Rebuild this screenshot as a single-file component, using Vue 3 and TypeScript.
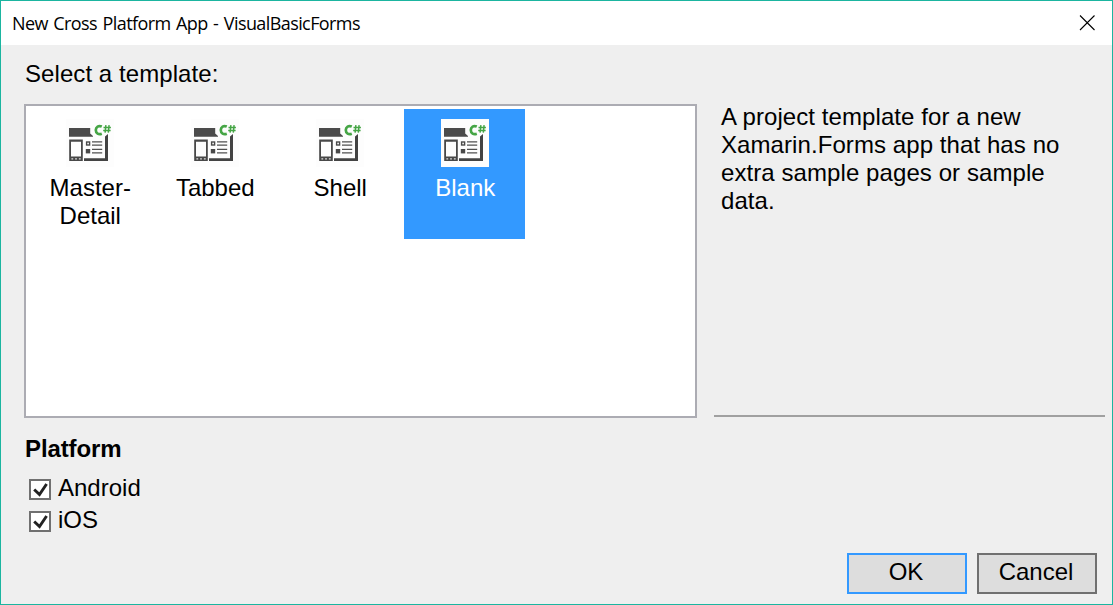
<script setup lang="ts">
import { ref } from 'vue'

interface Template {
  id: string
  lines: string[]
}

const templates: Template[] = [
  { id: 'master', lines: ['Master-', 'Detail'] },
  { id: 'tabbed', lines: ['Tabbed'] },
  { id: 'shell', lines: ['Shell'] },
  { id: 'blank', lines: ['Blank'] },
]
const selected = ref('blank')
const platforms = ref([
  { name: 'Android', checked: true },
  { name: 'iOS', checked: true },
])
</script>

<template>
  <div class="dialog">
    <header class="titlebar">
      <span class="title">New Cross Platform App - VisualBasicForms</span>
      <svg class="close" width="16" height="16" viewBox="0 0 16 16">
        <path d="M1 .5l14.5 14.5M15.5 .5l-14.5 14.5" stroke="#000" stroke-width="1.1" fill="none" />
      </svg>
    </header>
    <div class="prompt"><span>Select a template:</span></div>
    <main class="main">
      <div class="list">
        <div
          v-for="t in templates"
          :key="t.id"
          class="item"
          :class="{ selected: t.id === selected }"
          @click="selected = t.id"
        >
          <svg class="icon" width="48" height="48" viewBox="0 0 48 48">
            <rect width="48" height="48" fill="#fdfdfd" />
            <path d="M3 9H24.2V14.5L27 17V17.8H3Z" fill="#4b4b4b" />
            <path d="M42 15V42H18V39.2H39V17.5Z" fill="#434343" />
            <path
              d="M3.2 20.6H16.8V42H3.2ZM5 22.8V37.6H15V22.8Z"
              fill="#484848"
              fill-rule="evenodd"
            />
            <path d="M5.4 39.2h1.8v1.3H5.4zM9.1 39.2h1.8v1.3H9.1zM12.9 39.2h1.8v1.3h-1.8z" fill="#ddd" />
            <rect x="20.6" y="23" width="3" height="3" fill="none" stroke="#494949" stroke-width="1.4" />
            <rect x="19.8" y="30" width="4.4" height="4.4" fill="#484848" />
            <path d="M26 22.8H36.2M26 26.2H36.2M26 30.3H36.2M26 33.8H36.2" stroke="#505050" stroke-width="1.3" />
            <path
              d="M35.8 7.6C32.6 6.2 29.8 7.8 29.8 11.1C29.8 14.5 32.6 15.9 35.8 14.7"
              fill="none"
              stroke="#45a545"
              stroke-width="2.7"
            />
            <path
              d="M39.9 6.2L39.1 13.7M43.1 6.2L42.3 13.7M37.5 8.4H44.9M37.2 11.4H44.6"
              fill="none"
              stroke="#45a545"
              stroke-width="1.5"
            />
          </svg>
          <div class="label">
            <div v-for="l in t.lines" :key="l">{{ l }}</div>
          </div>
        </div>
      </div>
      <aside class="description">
        A project template for a new<br />Xamarin.Forms app that has no<br />extra sample pages or sample<br />data.
      </aside>
    </main>
    <section class="platform">
      <div class="heading">Platform</div>
      <div v-for="p in platforms" :key="p.name" class="option" @click="p.checked = !p.checked">
        <svg width="22" height="21" viewBox="0 0 22 21">
          <rect x="1" y="1" width="20" height="19" fill="#fff" stroke="#707070" stroke-width="2" />
          <path v-if="p.checked" d="M5.2 10.5L10.5 15.6L17.6 5" fill="none" stroke="#222" stroke-width="2.9" />
        </svg>
        <span>{{ p.name }}</span>
      </div>
    </section>
    <footer class="actions">
      <button class="button primary">OK</button>
      <button class="button">Cancel</button>
    </footer>
  </div>
</template>

<style>
body {
  margin: 0;
  overflow: hidden;
}
</style>

<style scoped>
.dialog {
  box-sizing: border-box;
  width: 1113px;
  height: 605px;
  border: 1px solid #1bb5a0;
  background: #efefef;
  color: #000;
  font: 24px/28px "Liberation Sans", Arial, sans-serif;
  display: flex;
  flex-direction: column;
}
.titlebar {
  height: 44px;
  flex: none;
  background: #fff;
  display: flex;
  align-items: center;
  justify-content: space-between;
  padding: 0 17px 0 11px;
  box-sizing: border-box;
}
.title {
  font: 18px/24px "Open Sans", "Noto Sans", sans-serif;
  letter-spacing: -0.59px;
  word-spacing: 1.4px;
  white-space: nowrap;
}
.prompt {
  height: 59px;
  flex: none;
  padding: 15px 0 0 24px;
  box-sizing: border-box;
  letter-spacing: 0.07px;
}
.main {
  display: flex;
  height: 314px;
  flex: none;
  padding: 0 7px 0 23px;
}
.list {
  box-sizing: border-box;
  width: 673px;
  border: 2px solid #acacb3;
  background: #fff;
  padding: 3px;
  display: flex;
  align-items: flex-start;
  gap: 4px;
}
.item {
  width: 121px;
  height: 130px;
  padding-top: 10px;
  box-sizing: border-box;
  text-align: center;
}
.icon {
  display: block;
  margin: 0 auto 7px;
  position: relative;
  left: 0.5px;
}
.label {
  padding-left: 1.5px;
}
.selected {
  background: #3399ff;
  color: #fff;
}
.description {
  margin: -1px 0 0 17px;
  height: 314px;
  box-sizing: border-box;
  flex: 1;
  padding-left: 7px;
  border-bottom: 2px solid #a0a0a0;
  white-space: nowrap;
  letter-spacing: 0.08px;
}
.platform {
  padding: 17px 0 0 24px;
  flex: 1;
}
.heading {
  font-weight: bold;
  margin-bottom: 11px;
  letter-spacing: -0.1px;
}
.option {
  height: 32px;
  display: flex;
  align-items: flex-start;
  padding-left: 4px;
}
.option svg {
  margin: 5px 7px 0 0;
}
.actions {
  display: flex;
  justify-content: flex-end;
  gap: 10px;
  padding: 0 15px 10px 0;
}
.button {
  width: 120px;
  height: 41px;
  box-sizing: border-box;
  border: 2px solid #707070;
  background: #ddd;
  color: #000;
  font: inherit;
  padding: 0 2px 3px 0;
}
.primary {
  border-color: #3399ff;
}
</style>
